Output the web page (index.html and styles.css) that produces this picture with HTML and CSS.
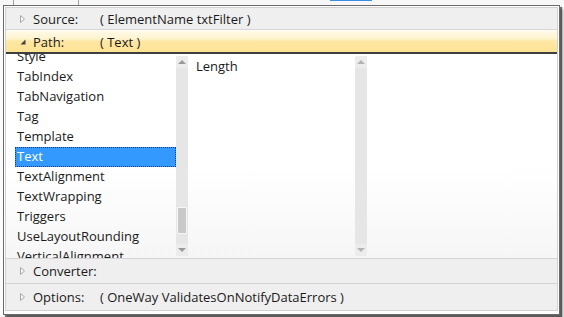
FILE: index.html
```html
<!DOCTYPE html>
<html>
<head>
<meta charset="utf-8">
<link rel="stylesheet" href="styles.css">
</head>
<body>
<div class="screen">
  <div class="backdrop">
    <span class="bd-gap1"></span><span class="bd-line"></span><span class="bd-gap2"></span><span class="bd-line"></span><span class="bd-gap3"></span><span class="bd-blue"></span>
  </div>
  <div class="popup">
    <div class="inner">
      <div class="row row-source">
        <svg class="tri" width="8" height="10" viewBox="0 0 8 10"><path d="M1.5 1.5 L5.5 5 L1.5 8.5 Z" fill="#fafafa" stroke="#a8a8a8" stroke-width="1"/></svg>
        <span class="label">Source:</span>
        <span class="value">( ElementName txtFilter )</span>
      </div>
      <div class="row row-path">
        <svg class="tri" width="8" height="10" viewBox="0 0 8 10"><path d="M6.5 2.5 L6.5 7.5 L1.5 7.5 Z" fill="#404040"/></svg>
        <span class="label">Path:</span>
        <span class="value">( Text )</span>
      </div>
      <div class="lists">
        <div class="listbox">
          <div class="viewport">
            <ul class="items scrolled">
              <li>Style</li>
              <li>TabIndex</li>
              <li>TabNavigation</li>
              <li>Tag</li>
              <li>Template</li>
              <li class="selected">Text</li>
              <li>TextAlignment</li>
              <li>TextWrapping</li>
              <li>Triggers</li>
              <li>UseLayoutRounding</li>
              <li>VerticalAlignment</li>
            </ul>
          </div>
          <div class="scrollbar">
            <div class="sb-btn"><span class="arr up"></span></div>
            <div class="sb-track">
              <div class="sb-space"></div>
              <div class="sb-thumb"></div>
              <div class="sb-rest"></div>
            </div>
            <div class="sb-btn"><span class="arr down"></span></div>
          </div>
        </div>
        <div class="listbox">
          <div class="viewport">
            <ul class="items">
              <li>Length</li>
            </ul>
          </div>
          <div class="scrollbar disabled">
            <div class="sb-btn"><span class="arr up"></span></div>
            <div class="sb-track"></div>
            <div class="sb-btn"><span class="arr down"></span></div>
          </div>
        </div>
        <div class="filler"></div>
      </div>
      <div class="row row-converter">
        <svg class="tri" width="8" height="10" viewBox="0 0 8 10"><path d="M1.5 1.5 L5.5 5 L1.5 8.5 Z" fill="#fafafa" stroke="#a8a8a8" stroke-width="1"/></svg>
        <span class="label">Converter:</span>
      </div>
      <div class="row row-options">
        <svg class="tri" width="8" height="10" viewBox="0 0 8 10"><path d="M1.5 1.5 L5.5 5 L1.5 8.5 Z" fill="#fafafa" stroke="#a8a8a8" stroke-width="1"/></svg>
        <span class="label">Options:</span>
        <span class="value">( OneWay ValidatesOnNotifyDataErrors )</span>
      </div>
    </div>
  </div>
</div>
</body>
</html>
```
FILE: styles.css
```css
html, body {
  margin: 0;
  padding: 0;
  background: #ffffff;
}
body {
  font-family: "Open Sans", "Noto Sans", sans-serif;
  font-size: 13px;
  color: #1a1a1a;
}
.screen {
  width: 564px;
  height: 317px;
  overflow: hidden;
  background: #fbfbfb;
}
.backdrop {
  height: 5px;
  display: flex;
  background: #f7f7f7;
}
.bd-gap1 { width: 13px; }
.bd-gap2 { width: 64px; }
.bd-gap3 { width: 251px; }
.bd-line { width: 1px; background: #a0a0a0; }
.bd-blue { width: 42px; height: 1px; background: #3a8ee6; }

.popup {
  margin-left: 3px;
  width: 553px;
  height: 306px;
  border: 1px solid #6a6a6a;
  padding: 1px;
  background: #ffffff;
  box-shadow: 2px 2px 1px rgba(0,0,0,0.55), 4px 4px 2px rgba(0,0,0,0.2);
}
.inner {
  border: 1px solid #d2d2d2;
  height: 302px;
  display: flex;
  flex-direction: column;
  background: #f0f0f0;
}
.row {
  display: flex;
  align-items: center;
  flex: none;
  white-space: nowrap;
}
.tri {
  margin-left: 13px;
  margin-right: 6px;
  flex: none;
}
.label {
  width: 67px;
}
.row-source {
  height: 21px;
  border-bottom: 1px solid #d6d6d6;
  background: #efefef;
}
.row-path {
  height: 21px;
  border-top: 1px solid #fffdf5;
  background: linear-gradient(#fff9e6 0%, #fff4d2 35%, #ffe7a3 50%, #ffe394 100%);
  border-bottom: 2px solid #3e3e3e;
}
.lists {
  height: 204px;
  display: flex;
  padding-left: 9px;
  gap: 6px;
  background: linear-gradient(#ffffff 0%, #ffffff 55%, #f6f6f6 100%);
  flex: none;
}
.listbox {
  display: flex;
  height: 204px;
}
.viewport {
  width: 161px;
  height: 204px;
  overflow: hidden;
}
.items {
  list-style: none;
  margin: 0;
  padding: 0;
}
.items.scrolled {
  margin-top: -7px;
}
.items li {
  height: 20px;
  line-height: 19px;
  padding-left: 2px;
  box-sizing: border-box;
}
.items:not(.scrolled) li {
  margin-top: 3px;
}
.items li.selected {
  background: #3399ff;
  color: #ffffff;
  outline: 1px dotted #1c3f73;
  outline-offset: -1px;
}
.scrollbar {
  width: 12px;
  margin-top: 2px;
  height: 200px;
  display: flex;
  flex-direction: column;
  background: #e9e9e9;
}
.sb-btn {
  height: 12px;
  flex: none;
  display: flex;
  align-items: center;
  justify-content: center;
  background: #ececec;
}
.sb-track {
  flex: 1;
  display: flex;
  flex-direction: column;
  background: #e6e6e6;
}
.sb-space { height: 139px; }
.sb-thumb {
  height: 25px;
  margin: 0 1px;
  background: #c9c9c9;
  border: 1px solid #f6f6f6;
}
.sb-rest { flex: 1; }
.arr {
  width: 0;
  height: 0;
  border-left: 4px solid transparent;
  border-right: 4px solid transparent;
}
.arr.up { border-bottom: 4px solid #9a9a9a; }
.arr.down { border-top: 4px solid #9a9a9a; }
.disabled .arr.up { border-bottom-color: #b4b4b4; }
.disabled .arr.down { border-top-color: #b4b4b4; }
.filler { flex: 1; }
.row-converter {
  height: 24px;
  border-top: 1px solid #d4d4d4;
  background: #efefef;
}
.row-options {
  flex: 1;
  border-top: 1px solid #d4d4d4;
  background: #efefef;
}
```
